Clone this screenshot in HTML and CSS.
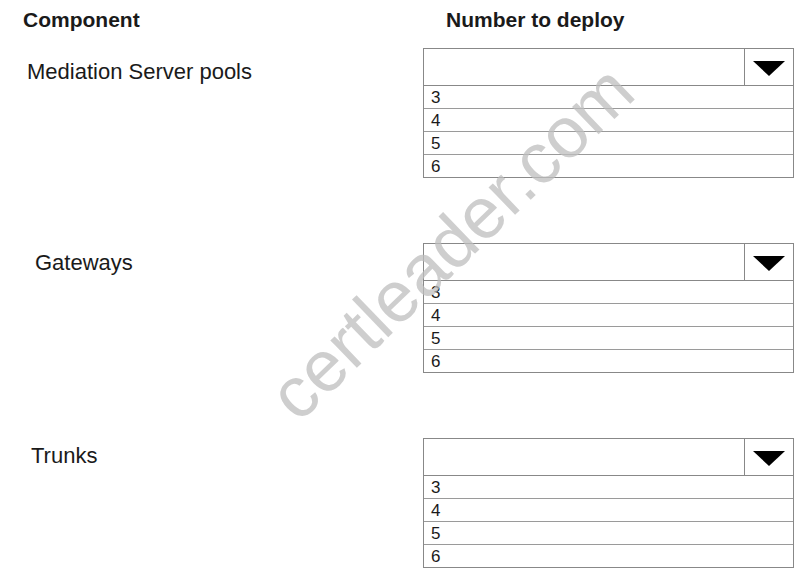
FILE: index.html
```html
<!Doctype html>
<html lang="en">
<head>
    <meta charset="UTF-8">
    <meta name="viewport" content="width=device-width, initial-scale=1.0">
    <title>Number to deploy</title>
    <link rel="stylesheet" href="styles.css">
</head>
<body>
    <div class="sheet">
        <div class="row header">
            <div class="col-label">Component</div>
            <div class="col-value">Number to deploy</div>
        </div>

        <div class="row item">
            <div class="label label-pools">Mediation Server pools</div>
            <div class="dropdown">
                <div class="select">
                    <span class="select-value"></span>
                    <span class="select-arrow">
                        <svg width="32" height="15" viewBox="0 0 32 15"><path d="M0 0h32L16 15z" fill="#000"/></svg>
                    </span>
                </div>
                <ul class="options">
                    <li>3</li>
                    <li>4</li>
                    <li>5</li>
                    <li>6</li>
                </ul>
            </div>
        </div>

        <div class="row item">
            <div class="label label-gateways">Gateways</div>
            <div class="dropdown">
                <div class="select">
                    <span class="select-value"></span>
                    <span class="select-arrow">
                        <svg width="32" height="15" viewBox="0 0 32 15"><path d="M0 0h32L16 15z" fill="#000"/></svg>
                    </span>
                </div>
                <ul class="options">
                    <li>3</li>
                    <li>4</li>
                    <li>5</li>
                    <li>6</li>
                </ul>
            </div>
        </div>

        <div class="row item">
            <div class="label label-trunks">Trunks</div>
            <div class="dropdown">
                <div class="select">
                    <span class="select-value"></span>
                    <span class="select-arrow">
                        <svg width="32" height="15" viewBox="0 0 32 15"><path d="M0 0h32L16 15z" fill="#000"/></svg>
                    </span>
                </div>
                <ul class="options">
                    <li>3</li>
                    <li>4</li>
                    <li>5</li>
                    <li>6</li>
                </ul>
            </div>
        </div>

        <span class="watermark">certleader.com</span>
    </div>
</body>
</html>
```

FILE: styles.css
```css
:root {
    --text-color: #1a1a1a;
    --line-color: #888;
    --row-line: #9a9a9a;
    --mark-color: rgba(190, 190, 190, 0.75);
}

* {
    margin: 0;
    padding: 0;
    box-sizing: border-box;
}

body {
    font-family: 'Liberation Sans', Arial, sans-serif;
    background-color: #fff;
    color: var(--text-color);
}

.sheet {
    position: relative;
    width: 799px;
    height: 574px;
    overflow: hidden;
    padding-top: 8px;
}

.row {
    display: grid;
    grid-template-columns: 423px 371px;
}

.header {
    font-size: 21px;
    font-weight: bold;
    line-height: 24px;
    margin-bottom: 16px;
}

.header .col-label {
    padding-left: 23px;
}

.header .col-value {
    padding-left: 23px;
}

.item + .item {
    margin-top: 65px;
}

.label {
    font-size: 22px;
    line-height: 25px;
    padding-top: 8px;
}

.label-pools {
    padding-left: 27px;
    padding-top: 11px;
}

.label-gateways {
    padding-left: 35px;
    padding-top: 7px;
}

.label-trunks {
    padding-left: 31px;
    padding-top: 5px;
}

.select {
    display: flex;
    height: 38px;
    border: 1px solid var(--line-color);
}

.select-value {
    flex: 1;
}

.select-arrow {
    width: 49px;
    border-left: 1px solid var(--line-color);
    display: flex;
    align-items: center;
    justify-content: center;
    padding-top: 2px;
}

.options {
    list-style: none;
    border: 1px solid var(--line-color);
    border-top: none;
}

.options li {
    height: 22px;
    line-height: 24px;
    font-size: 17px;
    padding-left: 7px;
}

.options li + li {
    border-top: 1px solid var(--row-line);
    height: 23px;
}

.watermark {
    position: absolute;
    left: 451px;
    top: 242px;
    transform: translate(-50%, -50%) rotate(-44deg);
    font-size: 72px;
    line-height: 1;
    color: var(--mark-color);
    white-space: nowrap;
    pointer-events: none;
}
```
